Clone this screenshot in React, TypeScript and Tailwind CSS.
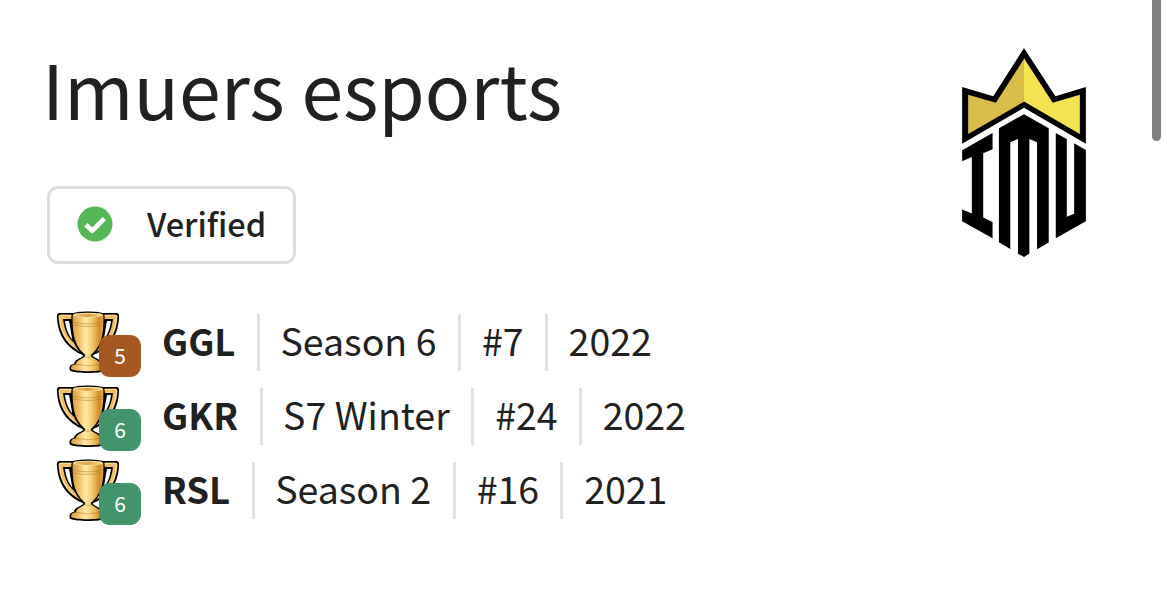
const results = [
  { league: 'GGL', season: 'Season 6', place: '#7', year: '2022', tier: 5, color: 'bg-[#a55822]' },
  { league: 'GKR', season: 'S7 Winter', place: '#24', year: '2022', tier: 6, color: 'bg-[#43946c]' },
  { league: 'RSL', season: 'Season 2', place: '#16', year: '2021', tier: 6, color: 'bg-[#43946c]' },
];

function TeamLogo() {
  return (
    <svg viewBox="67 40 370 625" className="mt-[48px] h-[209px] w-[124px] shrink-0">
      {/* crown */}
      <path d="M252 40 L346 184 L437 157 V326 L252 219 L67 326 V157 L160 184 Z" fill="#000" />
      <path d="M253 71 V200 L85 297 V180 L168 204 Z" fill="#d8bd4b" />
      <path d="M252 71 V200 L419 297 V180 L338 204 Z" fill="#f3e351" />
      {/* I */}
      <path d="M67 346 L158 294 V343 L130 355 V547 L158 560 V609 L67 558 V523 L96 535 V366 L67 379 Z" />
      {/* M */}
      <path d="M252 238 L326 280 V622 L291 642 V322 L268 312 V655 L252 665 L234 655 V312 L211 322 V641 L177 621 V280 Z" />
      {/* U */}
      <path d="M347 294 L380 312 V545 L402 536 V325 L437 345 V558 L347 609 Z" />
    </svg>
  );
}

function Handle() {
  return (
    <>
      <path d="M70 21 H29 C21 21 20 28 21 37 C24 92 54 130 102 149 L112 120 Z" fill="#000" />
      <path d="M70 26 H31 C26 26 25 30 26 38 C30 88 57 123 102 143 L112 118 Z" fill="#edbf68" />
      <path d="M69 28 H32 C28 28 28 32 29 38 C33 77 47 102 70 121" fill="none" stroke="#ffe3a6" strokeWidth="3" />
      <path d="M39 39 H68 L82 118 C57 101 44 80 39 39 Z" fill="#000" />
      <path d="M45 45 H57 L67 101 C54 84 48 68 45 45 Z" fill="#fff" />
    </>
  );
}

function Trophy() {
  return (
    <svg viewBox="21 18 189 189" className="h-[63px] w-[63px] overflow-visible">
      <defs>
        <linearGradient id="cup" x1="0" x2="1">
          <stop offset="0" stopColor="#d99f48" />
          <stop offset="0.2" stopColor="#eebf62" />
          <stop offset="0.42" stopColor="#ffeaa8" />
          <stop offset="0.62" stopColor="#f5cd70" />
          <stop offset="0.87" stopColor="#d08d2c" />
          <stop offset="1" stopColor="#e5ad49" />
        </linearGradient>
        <linearGradient id="rim" x1="0" x2="1">
          <stop offset="0" stopColor="#e8bc68" />
          <stop offset="0.5" stopColor="#d8a04c" />
          <stop offset="1" stopColor="#f8d778" />
        </linearGradient>
      </defs>
      <Handle />
      <g transform="matrix(-1 0 0 1 228 0)">
        <Handle />
      </g>
      {/* outline */}
      <path d="M65 23 C78 14 150 14 163 23 C168 76 164 117 128 147 C128 156 154 158 155 173 C169 176 171 184 168 194 C150 203 78 203 60 194 C56 184 59 176 72 173 C74 158 100 156 100 147 C64 117 60 76 65 23 Z" fill="#000" />
      {/* bowl, stem and base */}
      <path d="M68 27 C67 84 72 119 107 148 H121 C156 119 161 84 160 27 Z" fill="url(#cup)" />
      <path d="M106 147 H122 C123 159 149 159 150 175 C161 177 165 181 163 190 C145 198 81 198 64 190 C62 180 66 177 78 175 C79 159 105 159 106 147 Z" fill="url(#cup)" />
      <ellipse cx="114" cy="27" rx="45" ry="7" fill="#ffe8a4" />
      <ellipse cx="114" cy="28" rx="40" ry="5" fill="url(#rim)" />
      <g fill="none" stroke="#a56c25" strokeWidth="2" opacity="0.65">
        <path d="M69 48 Q114 59 159 48" />
        <path d="M70 56 Q114 67 158 56" />
        <path d="M78 175 Q114 184 150 175" />
        <path d="M101 152 Q114 157 127 152" />
      </g>
    </svg>
  );
}

export default function App() {
  return (
    <div className="flex h-[590px] w-[1170px] overflow-hidden bg-white font-['Noto_Sans_CJK_SC','Noto_Sans',sans-serif] text-[#212121]">
      <div className="flex flex-1 flex-col items-start pl-[47px]">
        <h1 className="-ml-[5px] mt-[33px] h-[110px] whitespace-nowrap text-[75.1px] leading-[110px]">
          Imuers esports
        </h1>

        <div className="mt-[43px] flex h-[78px] w-[249px] items-center rounded-[11px] border-3 border-[#dedede] pl-[27px]">
          <svg viewBox="0 0 36 36" className="-mt-[2px] mr-[34px] h-9 w-9">
            <circle cx="18" cy="18" r="17.5" fill="#57b657" />
            <path d="M8.8 18.8 L15.2 24.8 L27.2 12.7" fill="none" stroke="#fff" strokeWidth="4.6" strokeLinejoin="round" />
          </svg>
          <span className="-mt-[4px] whitespace-nowrap text-[32.5px] font-medium leading-[40px]">Verified</span>
        </div>

        <div className="mt-[42px] flex flex-col pl-[10px]">
          {results.map((r) => (
            <div key={r.league} className="flex h-[74px] items-center whitespace-nowrap text-[37.5px] leading-[50px]">
              <div className="relative mr-[21px] h-[66px] w-[84px] pt-[2px]">
                <Trophy />
                <span
                  className={`absolute -bottom-px right-0 flex h-[42px] w-[42px] items-center justify-center rounded-[11px] pb-[2px] text-[21px] leading-none text-white ${r.color}`}
                >
                  {r.tier}
                </span>
              </div>
              <span className="-mt-[2px] pb-[5px] pr-[21.5px] pt-[2px] text-[36.5px] font-bold">{r.league}</span>
              <span className="-mt-[2px] border-l-3 border-[#e2e2e2] pb-[6px] pl-[20.5px] pr-[21.5px] pt-px">{r.season}</span>
              <span className="-mt-[2px] border-l-3 border-[#e2e2e2] pb-[6px] pl-[21px] pr-[21px] pt-px">{r.place}</span>
              <span className="-mt-[2px] border-l-3 border-[#e2e2e2] pb-[6px] pl-[21px] pt-px">{r.year}</span>
            </div>
          ))}
        </div>
      </div>

      <TeamLogo />
      {/* scrollbar */}
      <div className="ml-[66px] mr-[9px] h-[141px] w-[9px] shrink-0 rounded-b-full bg-[#808080]" />
    </div>
  );
}
